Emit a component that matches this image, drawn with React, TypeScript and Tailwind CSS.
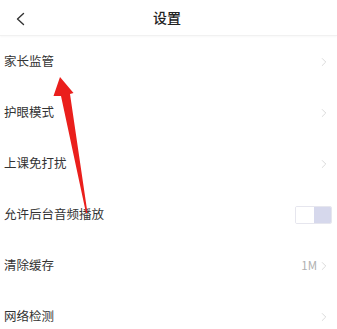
import { ChevronRight } from "lucide-react";

// Settings rows
const ROWS: { label: string; kind: "link" | "toggle" | "value"; value?: string }[] = [
  { label: "家长监管", kind: "link" },
  { label: "护眼模式", kind: "link" },
  { label: "上课免打扰", kind: "link" },
  { label: "允许后台音频播放", kind: "toggle" },
  { label: "清除缓存", kind: "value", value: "1M" },
  { label: "网络检测", kind: "link" },
];

export default function App() {
  return (
    <div
      className="relative w-[337px] h-[329px] overflow-hidden bg-white text-[#333]"
      style={{ fontFamily: '"Noto Sans CJK SC", "Noto Sans", sans-serif' }}
    >
      {/* Header */}
      <div className="h-[36px] flex items-center justify-center relative border-b border-[#f1f1f1] shadow-[0_1px_2px_rgba(0,0,0,0.03)]">
        <svg
          className="absolute left-[15px] top-[12px]"
          width="11"
          height="14"
          viewBox="0 0 11 14"
          fill="none"
        >
          <path d="M8.5 1.5 L2.5 7 L8.5 12.5" stroke="#333" strokeWidth="1.4" strokeLinecap="round" strokeLinejoin="round" />
        </svg>
        <h1 className="text-[14px] font-medium text-[#222] ml-[-3px]">设置</h1>
      </div>

      {/* Rows */}
      <div className="flex flex-col">
        {ROWS.map((row) => (
          <div key={row.label} className="h-[51px] flex items-center justify-between pl-[4px] pr-[6px]">
            <span className="text-[12.5px] text-[#333]">{row.label}</span>
            {row.kind === "toggle" ? (
              <div className="flex w-[37px] h-[18px] mr-[-1px] border border-[#e6e6ee] rounded-[2px] overflow-hidden">
                <div className="w-1/2 bg-white" />
                <div className="w-1/2 bg-[#d6d8ec]" />
              </div>
            ) : (
              <div className="flex items-center">
                {row.value && <span className="text-[11.5px] text-[#b0b0b0]">{row.value}</span>}
                <ChevronRight className="w-[14px] h-[14px] text-[#cfcfcf]" strokeWidth={1.3} />
              </div>
            )}
          </div>
        ))}
      </div>

      {/* Red arrow overlay */}
      <svg className="absolute left-0 top-0 pointer-events-none" width="337" height="329" viewBox="0 0 337 329">
        <polygon
          points="60,77 73.5,93 70,94 87.5,213 86,213 61,96 53.5,96"
          fill="#ea1f1c"
        />
      </svg>
    </div>
  );
}
